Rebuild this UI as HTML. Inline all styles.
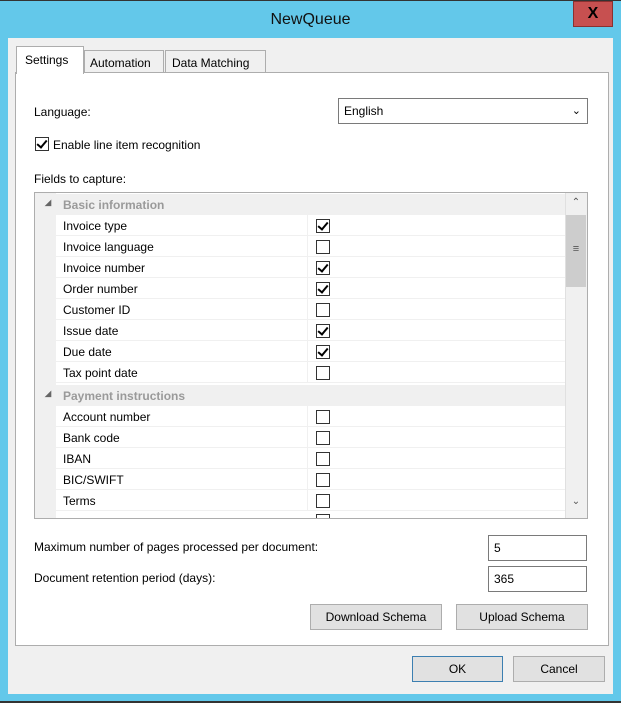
<!DOCTYPE html>
<html><head><style>
*{box-sizing:border-box;margin:0;padding:0}
body{width:621px;height:703px;background:#63c8ea;font-family:"Liberation Sans",sans-serif;font-size:12px;color:#000;position:relative;overflow:hidden}
.a{position:absolute}
.btn{position:absolute;background:#e1e1e1;border:1px solid #adadad;text-align:center;line-height:24px}
.inp{position:absolute;background:#fff;border:1px solid #7a7a7a;padding-left:5px;line-height:24px}
.cb{position:absolute;width:14px;height:14px;border:1px solid #333;background:#fff}
.ck::after{content:"";position:absolute;left:3px;top:0px;width:4px;height:8px;border:solid #000;border-width:0 2px 2px 0;transform:rotate(40deg)}
.row{position:absolute;left:56px;width:509px;height:21px;border-bottom:1px solid #f0f0f0}
.row span{position:absolute;left:7px;top:4px}
.row .cb{left:260px;top:4px}
.row i{position:absolute;left:251px;top:0;width:1px;height:21px;background:#f0f0f0}
.hdr{position:absolute;left:35px;width:530px;height:21px;background:#f0f0f0;color:#9a9a9a;font-weight:bold}
</style></head><body>
<div class="a" style="left:0;top:0;width:621px;height:1px;background:#333"></div>
<div class="a" style="left:0;top:11px;width:621px;text-align:center;font-size:16px;color:#111">NewQueue</div>
<div class="a" style="left:573px;top:1px;width:40px;height:26px;background:#c75050;border:1px solid #8a3030;color:#000;font-weight:bold;font-size:16px;text-align:center;line-height:24px">X</div>
<div class="a" style="left:8px;top:38px;width:605px;height:656px;background:#f0f0f0"></div>
<div class="a" style="left:0;top:701px;width:621px;height:2px;background:#333"></div>
<div class="a" style="left:84px;top:50px;width:80px;height:23px;background:#f0f0f0;border:1px solid #adadad;padding:5px 0 0 5px">Automation</div>
<div class="a" style="left:165px;top:50px;width:101px;height:23px;background:#f0f0f0;border:1px solid #adadad;padding:5px 0 0 6px">Data Matching</div>
<div class="a" style="left:15px;top:72px;width:594px;height:574px;background:#fff;border:1px solid #adadad"></div>
<div class="a" style="left:16px;top:46px;width:68px;height:28px;background:#fff;border:1px solid #adadad;border-bottom:none;padding:6px 0 0 8px">Settings</div>
<div class="a" style="left:34px;top:105px">Language:</div>
<div class="inp" style="left:338px;top:98px;width:250px;height:26px">English<span style="position:absolute;right:6px;top:0;font-size:11px">&#8964;</span></div>
<div class="cb ck" style="left:35px;top:137px"></div>
<div class="a" style="left:53px;top:138px">Enable line item recognition</div>
<div class="a" style="left:34px;top:172px">Fields to capture:</div>
<div class="a" style="left:34px;top:192px;width:554px;height:327px;border:1px solid #adadad;background:#fff;overflow:hidden"></div>
<div class="a" style="left:35px;top:193px;width:21px;height:325px;background:#f0f0f0"></div>
<div class="hdr" style="top:194px"><span style="position:absolute;left:10px;top:4px;font-size:8px;color:#666">&#9698;</span><span style="position:absolute;left:28px;top:4px">Basic information</span></div>
<div class="row" style="top:215px"><span>Invoice type</span><i></i><div class="cb ck"></div></div>
<div class="row" style="top:236px"><span>Invoice language</span><i></i><div class="cb"></div></div>
<div class="row" style="top:257px"><span>Invoice number</span><i></i><div class="cb ck"></div></div>
<div class="row" style="top:278px"><span>Order number</span><i></i><div class="cb ck"></div></div>
<div class="row" style="top:299px"><span>Customer ID</span><i></i><div class="cb"></div></div>
<div class="row" style="top:320px"><span>Issue date</span><i></i><div class="cb ck"></div></div>
<div class="row" style="top:341px"><span>Due date</span><i></i><div class="cb ck"></div></div>
<div class="row" style="top:362px"><span>Tax point date</span><i></i><div class="cb"></div></div>
<div class="hdr" style="top:385px"><span style="position:absolute;left:10px;top:4px;font-size:8px;color:#666">&#9698;</span><span style="position:absolute;left:28px;top:4px">Payment instructions</span></div>
<div class="row" style="top:406px"><span>Account number</span><i></i><div class="cb"></div></div>
<div class="row" style="top:427px"><span>Bank code</span><i></i><div class="cb"></div></div>
<div class="row" style="top:448px"><span>IBAN</span><i></i><div class="cb"></div></div>
<div class="row" style="top:469px"><span>BIC/SWIFT</span><i></i><div class="cb"></div></div>
<div class="row" style="top:490px"><span>Terms</span><i></i><div class="cb"></div></div>
<div class="a" style="left:316px;top:514px;width:14px;height:4px;border:1px solid #333;border-bottom:none"></div>
<div class="a" style="left:565px;top:193px;width:22px;height:325px;background:#f0f0f0;border-left:1px solid #e0e0e0"></div>
<div class="a" style="left:565px;top:197px;width:22px;height:18px;text-align:center;font-size:10px;color:#555">&#8963;</div>
<div class="a" style="left:566px;top:215px;width:20px;height:72px;background:#cdcdcd"></div>
<div class="a" style="left:566px;top:243px;width:20px;text-align:center;font-size:11px;color:#555">&#8801;</div>
<div class="a" style="left:565px;top:496px;width:22px;height:18px;text-align:center;font-size:10px;color:#555">&#8964;</div>
<div class="a" style="left:34px;top:540px">Maximum number of pages processed per document:</div>
<div class="inp" style="left:488px;top:535px;width:99px;height:26px">5</div>
<div class="a" style="left:34px;top:571px">Document retention period (days):</div>
<div class="inp" style="left:488px;top:566px;width:99px;height:26px">365</div>
<div class="btn" style="left:310px;top:604px;width:132px;height:26px">Download Schema</div>
<div class="btn" style="left:456px;top:604px;width:132px;height:26px">Upload Schema</div>
<div class="btn" style="left:412px;top:656px;width:91px;height:26px;border:1px solid #3c7fb1">OK</div>
<div class="btn" style="left:513px;top:656px;width:92px;height:26px">Cancel</div>
</body></html>
